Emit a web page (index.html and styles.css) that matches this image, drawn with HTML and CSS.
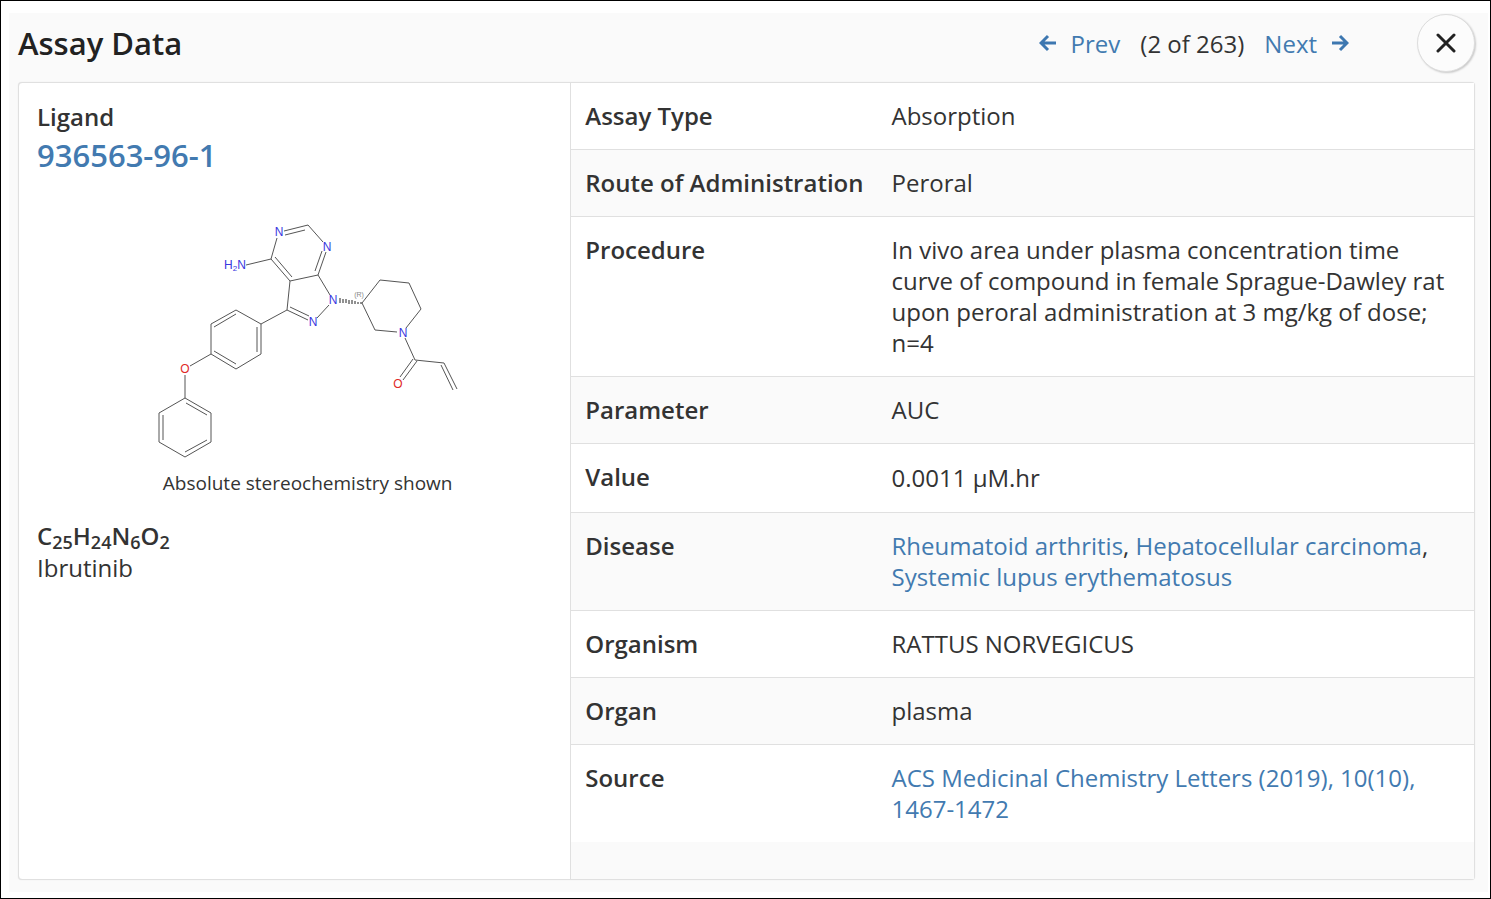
FILE: index.html
```
<!DOCTYPE html>
<html lang="en">
<head>
  <meta charset="UTF-8" />
  <meta name="viewport" content="width=device-width, initial-scale=1.0"/>
  <title>Assay Data</title>
  <link rel="stylesheet" href="styles.css">
</head>
<body>

  <div class="modal">
    <!-- Header with paging -->
    <header class="modal-header">
      <h1>Assay Data</h1>
      <nav class="pager">
        <a href="#prev" class="pager-link">
          <svg class="arrow" viewBox="0 0 18 18"><path d="M17 9H2M9 2L2 9l7 7"/></svg>
          Prev
        </a>
        <span>(2 of 263)</span>
        <a href="#next" class="pager-link">
          Next
          <svg class="arrow" viewBox="0 0 18 18"><path d="M1 9h15M9 2l7 7-7 7"/></svg>
        </a>
      </nav>
      <button class="close-button" type="button" aria-label="Close">
        <svg viewBox="0 0 20 20"><path d="M2 2l16 16M18 2L2 18"/></svg>
      </button>
    </header>

    <main class="card">
      <!-- Ligand -->
      <section class="ligand">
        <h2>Ligand</h2>
        <a href="#ligand" class="cas-number">936563-96-1</a>

        <figure class="structure">
          <svg viewBox="148 215 320 250" role="img" aria-label="Ibrutinib structure">
            <g class="bonds">
              <!-- pyrimidine -->
              <path d="M284 231L308 225L323 242M285 235L305 230"/>
              <path d="M326 252L318 275L290 281L271 259L277 238M322 251L315 271M292 277L275 257"/>
              <path d="M271 259L246 265"/>
              <!-- pyrazole -->
              <path d="M290 281L287 310L308 320M290 307L309 316M317 318L329 305M330 295L318 275"/>
              <!-- phenyl -->
              <path d="M287 310L261 324L236 310L211 324V354L236 369L261 354V324"/>
              <path d="M236 314L214 327M214 351L236 364M257 327V352"/>
              <path d="M211 354L190 366M185 375V398"/>
              <!-- phenoxy -->
              <path d="M185 398L211 413V442L185 457L159 442V413Z"/>
              <path d="M186 403L207 415M207 440L185 452M163 440V415"/>
              <!-- piperidine -->
              <path d="M362 303L380 280L409 283L421 309L406 328M397 332L375 330L362 303"/>
              <!-- acryloyl -->
              <path d="M405 338L415 360L444 363L457 389M441 365L453 390"/>
              <path d="M417 361L403 380M413 359L400 377"/>
            </g>
            <path class="wedge" d="M340 298v5M343 299v4M346 299v4M349 300v4M352 300v4M355 301v3M358 302v2M361 302v2"/>
            <g class="nitrogen">
              <text x="279" y="236">N</text>
              <text x="327" y="251">N</text>
              <text x="333" y="304">N</text>
              <text x="313" y="326">N</text>
              <text x="403" y="337">N</text>
              <text x="235" y="269">H<tspan class="small" dy="2">2</tspan><tspan dy="-2">N</tspan></text>
            </g>
            <g class="oxygen">
              <text x="185" y="373">O</text>
              <text x="398" y="388">O</text>
            </g>
            <text class="chirality" x="359" y="297">(R)</text>
          </svg>
          <figcaption>Absolute stereochemistry shown</figcaption>
        </figure>

        <div class="formula">C<sub>25</sub>H<sub>24</sub>N<sub>6</sub>O<sub>2</sub></div>
        <div class="name">Ibrutinib</div>
      </section>

      <!-- Assay details -->
      <section class="details">
        <table>
          <tr><th scope="row">Assay Type</th><td>Absorption</td></tr>
          <tr><th scope="row">Route of Administration</th><td>Peroral</td></tr>
          <tr><th scope="row">Procedure</th><td>In vivo area under plasma concentration time curve of compound in female Sprague-Dawley rat upon peroral administration at 3 mg/kg of dose; n=4</td></tr>
          <tr><th scope="row">Parameter</th><td>AUC</td></tr>
          <tr><th scope="row">Value</th><td class="measure">0.0011 µM.hr</td></tr>
          <tr><th scope="row">Disease</th><td><a href="#d1">Rheumatoid arthritis</a>, <a href="#d2">Hepatocellular carcinoma</a>, <a href="#d3">Systemic lupus erythematosus</a></td></tr>
          <tr><th scope="row">Organism</th><td>RATTUS NORVEGICUS</td></tr>
          <tr><th scope="row">Organ</th><td>plasma</td></tr>
          <tr><th scope="row">Source</th><td><a href="#source">ACS Medicinal Chemistry Letters (2019), 10(10), 1467-1472</a></td></tr>
        </table>
      </section>
    </main>
  </div>

</body>
</html>
```
FILE: styles.css
```
* {
  box-sizing: border-box;
}

body {
  font-family: "Open Sans", sans-serif;
  font-size: 24px;
  line-height: 31px;
  color: #333;
  background: #fff;
  margin: 0;
  min-height: 100vh;
  border: 1px solid #000;
  padding: 12px 2px 6px 8px;
  display: flex;
}

a {
  color: #427ab0;
  text-decoration: none;
}

.modal {
  flex: 1;
  background: #fafafa;
  padding: 0 13px 12px 9px;
  display: flex;
  flex-direction: column;
}

.modal-header {
  display: flex;
  align-items: center;
  height: 69px;
  padding-bottom: 9px;
}

h1 {
  flex: 1;
  margin: 0;
  font-size: 31px;
  font-weight: 600;
  color: #222;
}

.pager {
  display: flex;
  gap: 20px;
  margin-right: 68px;
}

.pager-link {
  display: flex;
  align-items: center;
  gap: 14px;
}

.arrow {
  width: 18px;
  height: 18px;
  fill: none;
  stroke: #3d77b0;
  stroke-width: 3;
}

.close-button {
  width: 58px;
  height: 58px;
  padding: 0;
  border: 1px solid #ddd;
  border-radius: 50%;
  background: #fcfcfc;
  box-shadow: 1px 1px 2px rgba(0, 0, 0, 0.2);
  display: flex;
  align-items: center;
  justify-content: center;
  cursor: pointer;
}

.close-button svg {
  width: 20px;
  height: 20px;
  fill: none;
  stroke: #222;
  stroke-width: 3;
  stroke-linecap: round;
}

.card {
  flex: 1;
  display: grid;
  grid-template-columns: 61fr 100fr;
  background: #fff;
  border: 1px solid #e0e0e0;
  border-radius: 4px;
  box-shadow: 0 0 1px rgba(0, 0, 0, 0.15);
}

.ligand {
  padding: 18px;
}

h2 {
  margin: 0 0 4px;
  font-size: 24px;
  font-weight: 600;
  line-height: 31px;
}

.cas-number {
  display: block;
  font-size: 31px;
  font-weight: 600;
  line-height: 38px;
}

.structure {
  margin: 41px 0 24px;
  padding-left: 26px;
  display: flex;
  flex-direction: column;
  align-items: center;
  gap: 6px;
}

.structure svg {
  width: 320px;
  height: 250px;
}

.bonds,
.wedge {
  fill: none;
  stroke: #555;
  stroke-width: 1;
}

.wedge {
  stroke: #222;
}

.structure text {
  font-family: "Liberation Sans", sans-serif;
  font-size: 12px;
  text-anchor: middle;
}

.nitrogen {
  fill: #3838e0;
}

.oxygen {
  fill: #e02828;
}

.structure .small {
  font-size: 8px;
}

.structure .chirality {
  font-size: 7px;
  fill: #888;
}

figcaption {
  font-size: 19px;
  line-height: 24px;
}

.formula {
  font-weight: 600;
  line-height: 33px;
}

.formula sub {
  font-size: 18px;
  line-height: 0;
  vertical-align: -4px;
}

.details {
  border-left: 1px solid #e0e0e0;
  background: #fafafa;
}

table {
  width: 100%;
  border-collapse: separate;
  border-spacing: 0;
}

tr {
  background: #fff;
}

tr:nth-child(even) {
  background: #fafafa;
}

th,
td {
  padding: 17px 14px 18px;
  border-bottom: 1px solid #e0e0e0;
  text-align: left;
  vertical-align: top;
}

th {
  font-weight: 600;
  white-space: nowrap;
}

tr:last-child th,
tr:last-child td {
  border-bottom: 0;
}

.measure {
  line-height: 33px;
}
```
